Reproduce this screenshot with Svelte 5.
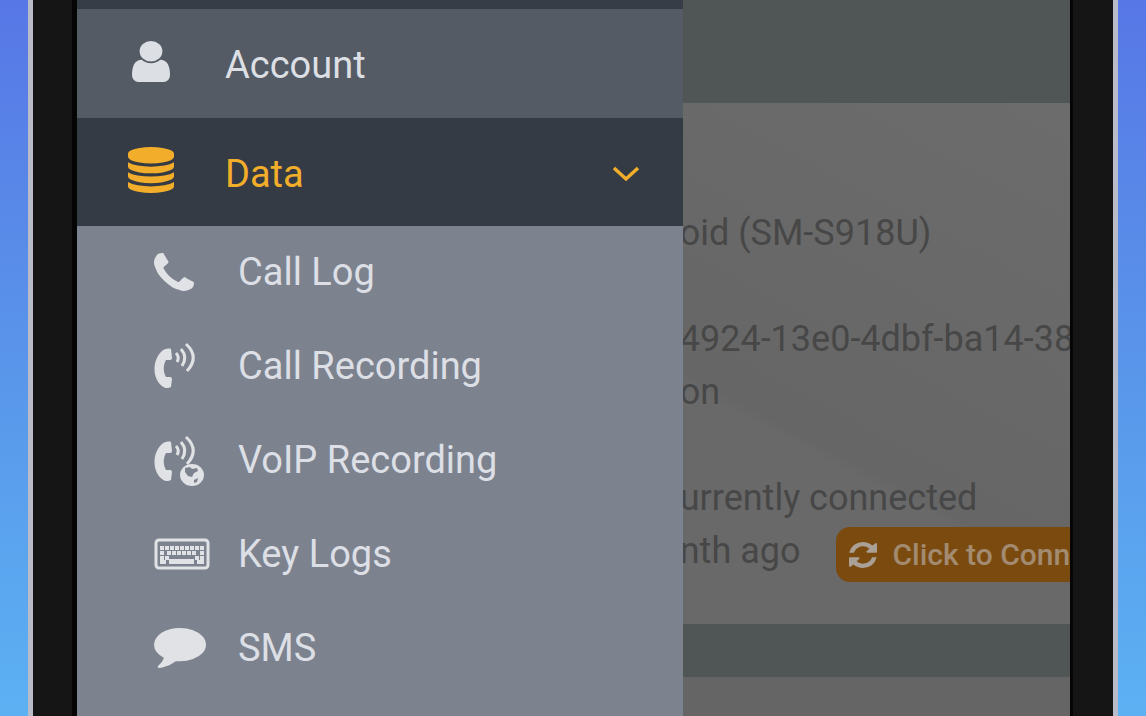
<script>
  let dataOpen = $state(true);

  const ITEMS = [
    { name: 'Call Log', icon: 'phone' },
    { name: 'Call Recording', icon: 'recording' },
    { name: 'VoIP Recording', icon: 'voip' },
    { name: 'Key Logs', icon: 'keyboard' },
    { name: 'SMS', icon: 'comment' }
  ];

  const KEY_ROWS = [
    { y: 8, keys: [6, 11, 16, 21, 26, 31, 36, 41, 46] },
    { y: 13, keys: [6, 13, 18, 23, 28, 33, 38, 46] },
    { y: 18, keys: [6, 11, 41, 46] }
  ];

  function toggleData() {
    dataOpen = !dataOpen;
  }
</script>

{#snippet handset()}
  <path d="M8 10C10 8 14 7 17 8L18 17Q18 19 16 19L12 19C9 24 9 31 12 36L16 36Q18 36 18 38L17 46C14 48 10 47 8 45C-2 37 -2 19 8 10Z" />
  <g class="waves">
    <path d="M22 12Q26 16 23 21" />
    <path d="M27 8Q34 16 28 25" />
    <path d="M32 3Q46 16 33 30" />
  </g>
{/snippet}

<div class="page">
  <div class="phone">
    <nav class="sidebar">
      <div class="sidebar-top"></div>
      <a class="row" href="#account">
        <span class="row-icon">
          <svg width="38" height="41" viewBox="256 128 1280 1536" preserveAspectRatio="none" aria-hidden="true">
            <path d="M1536 1399q0 109-62.5 187t-150.5 78h-854q-88 0-150.5-78t-62.5-187q0-85 8.500-160.500t31.500-152 58.500-131 94-89 134.500-34.500q131 128 313 128t313-128q76 0 134.500 34.500t94 89 58.500 131 31.500 152 8.500 160.500zm-256-887q0 159-112.500 271.500t-271.500 112.500-271.500-112.500-112.500-271.500 112.500-271.500 271.500-112.500 271.500 112.500 112.500 271.500z" />
          </svg>
        </span>
        Account
      </a>
      <button class="row row--active" aria-expanded={dataOpen} onclick={toggleData}>
        <span class="row-icon">
          <svg width="46" height="46" viewBox="128 0 1536 1792" preserveAspectRatio="none" aria-hidden="true">
            <path d="M896 768q237 0 443-43t325-127v170q0 69-103 128t-280 93.500-385 34.500-385-34.500-280-93.500-103-128v-170q119 84 325 127t443 43zm0 768q237 0 443-43t325-127v170q0 69-103 128t-280 93.500-385 34.500-385-34.500-280-93.500-103-128v-170q119 84 325 127t443 43zm0-384q237 0 443-43t325-127v170q0 69-103 128t-280 93.500-385 34.500-385-34.500-280-93.500-103-128v-170q119 84 325 127t443 43zm0-1152q208 0 385 34.500t280 93.500 103 128v128q0 69-103 128t-280 93.500-385 34.500-385-34.500-280-93.500-103-128v-128q0-69 103-128t280-93.500 385-34.500z" />
          </svg>
        </span>
        Data
        <svg class="chevron" width="28" height="18" viewBox="0 0 28 18" aria-hidden="true">
          <path d="M2 3L14 14L26 3" />
        </svg>
      </button>

      {#if dataOpen}
        <div class="submenu">
          {#each ITEMS as item}
            <a class="item" href="#{item.icon}">
              <span class="item-icon">
                {#if item.icon === 'phone'}
                  <svg width="40" height="38" viewBox="192 128 1408 1408" preserveAspectRatio="none" aria-hidden="true">
                    <path d="M1600 1240q0 27-10 70.500t-21 68.500q-21 50-122 106-94 51-186 51-27 0-53-3.500t-57.500-12.500-47-14.500-55.500-20.500-49-18q-98-35-175-83-127-79-264-216t-216-264q-48-77-83-175-3-9-18-49t-20.500-55.500-14.500-47-12.500-57.500-3.500-53q0-92 51-186 56-101 106-122 25-11 68.500-21t70.500-10q14 0 21 3 18 6 53 76 11 19 30 54t35 63.500 31 53.500q3 4 17.500 25t21.500 35.500 7 28.500q0 20-28.500 50t-62 55-62 53-28.500 46q0 9 5 22.500t8.500 20.500 14 24 11.500 19q76 137 174 235t235 174q2 1 19 11.500t24 14 20.500 8.500 22.500 5q18 0 46-28.500t53-62 55-62 50-28.500q14 0 28.500 7t35.500 21.500 25 17.500q25 15 53.500 31t63.500 35 54 30q70 35 76 53 3 7 3 21z" />
                  </svg>
                {:else if item.icon === 'recording'}
                  <svg width="52" height="50" viewBox="0 0 52 50" aria-hidden="true">
                    {@render handset()}
                  </svg>
                {:else if item.icon === 'voip'}
                  <svg width="52" height="52" viewBox="0 0 52 52" aria-hidden="true">
                    {@render handset()}
                    <ellipse cx="38" cy="41" rx="12" ry="11" />
                    <path class="land" d="M31 34L36 33L38 35L43 34L44 37L40 39L38 43L34 42L31 38ZM40 46L44 44L43 48L40 49Z" />
                  </svg>
                {:else if item.icon === 'keyboard'}
                  <svg width="56" height="32" viewBox="0 0 56 32" aria-hidden="true">
                    <rect class="keyboard-case" x="2" y="2" width="52" height="28" rx="3" />
                    {#each KEY_ROWS as row}
                      {#each row.keys as x}
                        <rect {x} y={row.y} width="4" height="4" />
                      {/each}
                    {/each}
                    <rect x="6" y="22" width="6" height="4" />
                    <rect x="15" y="21" width="25" height="5" />
                    <rect x="43" y="22" width="7" height="4" />
                  </svg>
                {:else}
                  <svg width="52" height="40" viewBox="0 256 1792 1536" preserveAspectRatio="none" aria-hidden="true">
                    <path d="M1792 896q0 174-120 321.500t-326 233-450 85.500q-70 0-145-8-198 175-460 242-49 14-114 22-17 2-30.500-9t-17.500-29v-1q-3-4-.5-12t2-10 4.500-9.500l6-9 7-8.500 8-9q7-8 31-34.500t34.500-38 31-39.500 32.500-51 27-59 26-76q-157-89-247.500-220t-90.500-281q0-130 71-248.500t191-204.500 286-136.500 348-50.500q244 0 450 85.500t326 233 120 321.500z" />
                  </svg>
                {/if}
              </span>
              {item.name}
            </a>
          {/each}
        </div>
      {/if}
    </nav>

    <main class="dashboard">
      <section class="card">
        <p>oid (SM-S918U)</p>
        <p></p>
        <p>4924-13e0-4dbf-ba14-38</p>
        <p>on</p>
        <p></p>
        <p>urrently connected</p>
        <div class="connect-line">
          <span>nth ago</span>
          <button class="connect">
            <svg width="28" height="26" viewBox="128 128 1536 1536" preserveAspectRatio="none" aria-hidden="true">
              <path d="M1639 1056q0 5-1 7-64 268-268 434.500t-478 166.500q-146 0-282.500-55t-243.500-157l-129 129q-19 19-45 19t-45-19-19-45v-448q0-26 19-45t45-19h448q26 0 45 19t19 45-19 45l-137 137q71 66 161 102t187 36q134 0 250-65t186-179q11-17 53-117 8-23 30-23h192q13 0 22.500 9.500t9.500 22.500zm25-800v448q0 26-19 45t-45 19h-448q-26 0-45-19t-19-45 19-45l138-138q-148-137-349-137-134 0-250 65t-186 179q-11 17-53 117-8 23-30 23h-199q-13 0-22.500-9.500t-9.500-22.500v-7q65-268 270-434.500t480-166.500q146 0 284 55.500t245 156.500l130-129q19-19 45-19t45 19 19 45z" />
            </svg>
            Click to Conn
          </button>
        </div>
      </section>
      <section class="card card--next"></section>
    </main>
  </div>
</div>

<style>
:global(body) {
  margin: 0;
}

.page {
  box-sizing: border-box;
  min-height: 100vh;
  display: flex;
  padding: 0 28px;
  background: linear-gradient(#5777e6, #5995ea 50%, #5cb1f3);
  font-family: Roboto, "Liberation Sans", sans-serif;
  font-size: 38px;
  line-height: 53px;
}

.phone {
  flex: 1;
  min-width: 0;
  display: grid;
  grid-template-columns: 61fr 39fr;
  border: solid #b9bcc8;
  border-width: 0 5px;
  background: #151515;
  padding: 0 43px 0 44px;
}

.sidebar {
  min-width: 0;
  background: #7d838e;
  box-shadow: -5px 0 #050505;
}

.sidebar-top {
  height: 9px;
  background: #363d46;
}

.row {
  box-sizing: border-box;
  width: 100%;
  height: 109px;
  display: flex;
  align-items: center;
  gap: 51px;
  padding: 4px 43px 0 51px;
  border: 0;
  background: #545b65;
  color: #dcdfe3;
  font: inherit;
  text-decoration: none;
  text-align: left;
  cursor: pointer;
}

.row--active {
  height: 108px;
  background: #343b44;
  color: #f2ae2b;
}

.row-icon {
  width: 46px;
  display: flex;
  justify-content: center;
}

svg {
  display: block;
  flex: none;
  fill: currentColor;
}

.row-icon svg {
  margin-bottom: 8px;
}

.chevron {
  margin-left: auto;
  fill: none;
  stroke: currentColor;
  stroke-width: 3.5;
}

.item {
  box-sizing: border-box;
  height: 94px;
  display: flex;
  align-items: center;
  gap: 28px;
  padding: 0 0 2px 77px;
  color: #dcdfe5;
  text-decoration: none;
  white-space: nowrap;
}

.item-icon {
  width: 56px;
  color: #e0e2e5;
}

.waves {
  fill: none;
  stroke: currentColor;
  stroke-width: 3;
}

.land {
  fill: #7d838e;
}

.keyboard-case {
  fill: none;
  stroke: currentColor;
  stroke-width: 3;
}

.dashboard {
  min-width: 0;
  display: flex;
  flex-direction: column;
  gap: 53px;
  padding-top: 103px;
  overflow: hidden;
  background: #505556;
  color: #474747;
  font-size: 36px;
  box-shadow: 3px 0 #050505;
}

/* the card runs in under the open sidebar */
.card {
  margin-left: -3px;
  padding: 104px 0 46px;
  background: linear-gradient(28deg, #696969 33%, #666666 35%, #6c6c6c);
  white-space: nowrap;
}

.card--next {
  flex: 1;
  padding: 0;
  background: #656565;
}

.card p {
  height: 53px;
  margin: 0;
}

.connect-line {
  height: 53px;
  display: flex;
  align-items: center;
  gap: 36px;
}

.connect {
  flex: 1 0 auto;
  height: 55px;
  display: flex;
  align-items: center;
  gap: 15px;
  margin: 6px 0 0;
  padding: 0 0 0 13px;
  border: 0;
  border-radius: 14px 0 0 14px;
  background: #7b4a0f;
  color: #a28b70;
  font: inherit;
  font-size: 30px;
  font-weight: 500;
  cursor: pointer;
}

.connect svg {
  color: #aaa095;
}
</style>
